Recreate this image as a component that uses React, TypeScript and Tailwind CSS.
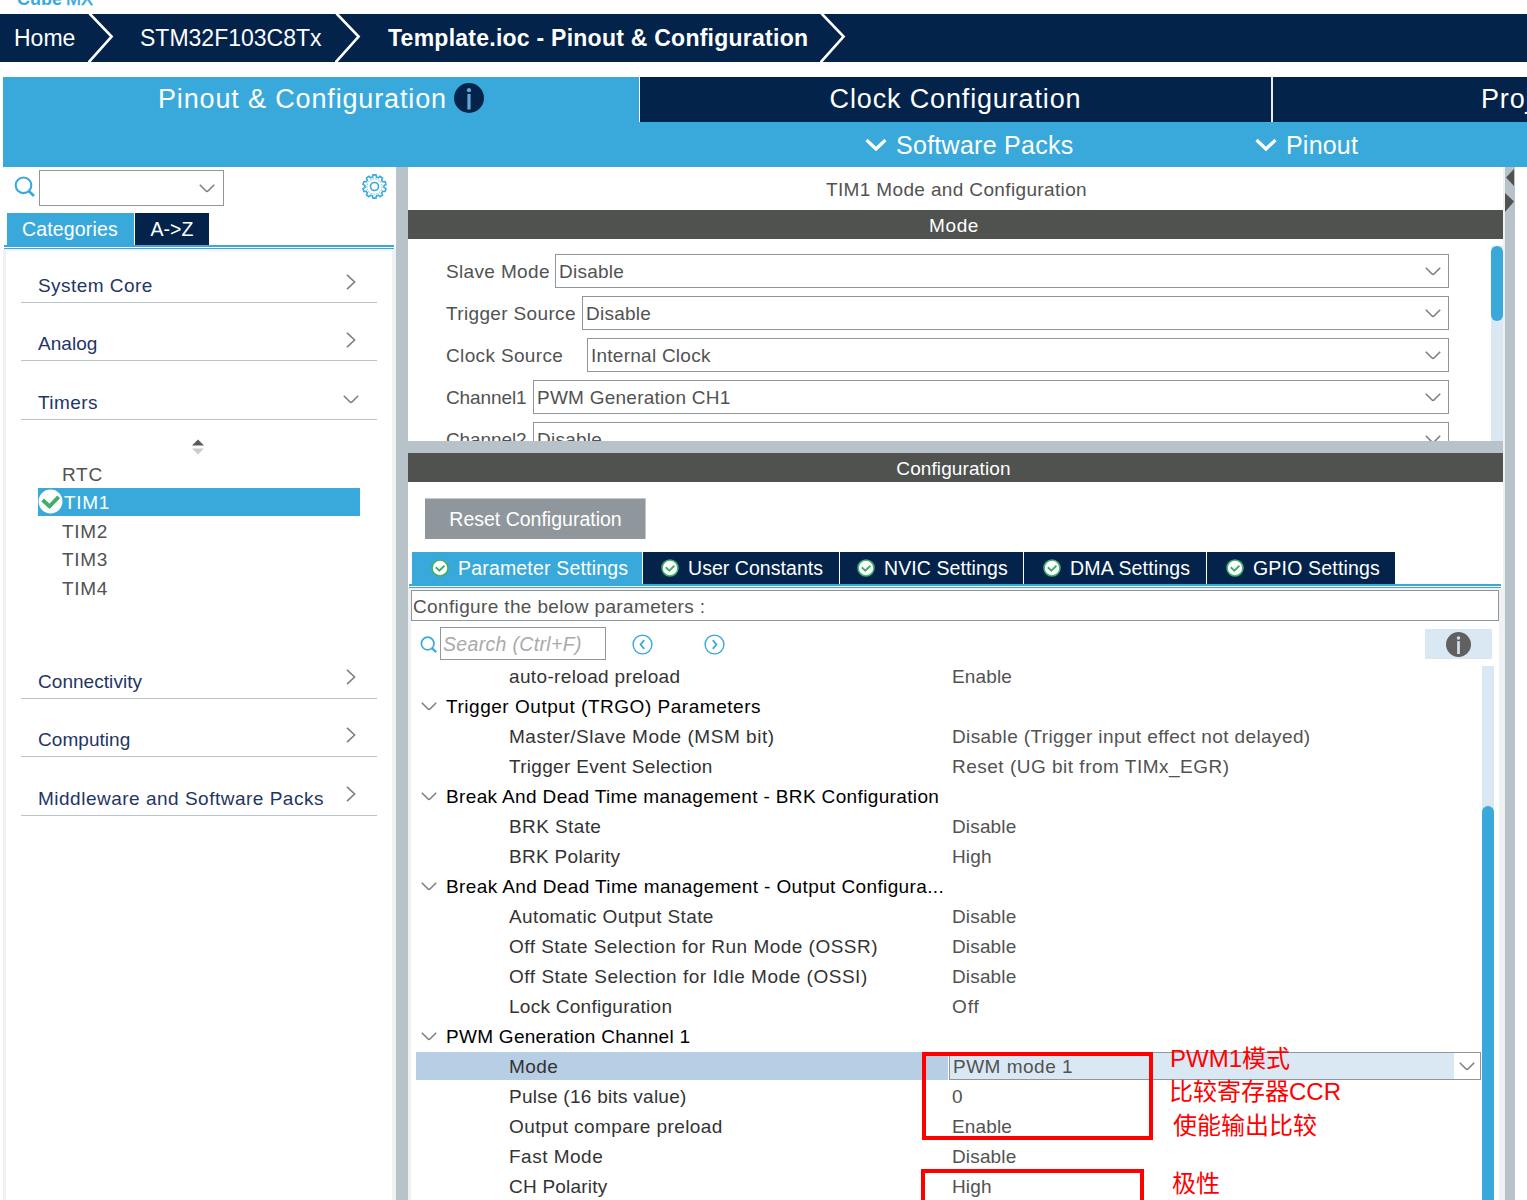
import { clsx } from 'clsx';

type IconProps = { className?: string };

function ChevronDown({ className }: IconProps) {
  return (
    <svg viewBox="0 0 16 9" className={clsx('h-[9px] w-4 shrink-0', className)} fill="none" stroke="currentColor" strokeWidth="1.6">
      <path d="M0.8 0.8 L6.8 6.8 Q8 8 9.2 6.8 L15.2 0.8" />
    </svg>
  );
}

function ChevronRight({ className }: IconProps) {
  return (
    <svg viewBox="0 0 10 16" className={clsx('h-4 w-[10px] shrink-0', className)} fill="none" stroke="currentColor" strokeWidth="1.6">
      <path d="M1 0.8 L8.6 8 L1 15.2" />
    </svg>
  );
}

function MenuChevron() {
  return (
    <svg viewBox="0 0 22 14" className="mt-px h-[14px] w-[22px]" fill="none" stroke="white" strokeWidth="3.2">
      <path d="M1.5 2 L11 11 L20.5 2" />
    </svg>
  );
}

function CrumbArrow() {
  return (
    <svg viewBox="0 0 26 48" className="h-12 w-[26px] shrink-0" fill="none" stroke="white" strokeWidth="2.6">
      <path d="M1.5 -0.5 L23.6 22.5 L0.5 48.5" />
    </svg>
  );
}

function SearchIcon({ className }: IconProps) {
  return (
    <svg viewBox="0 0 21 21" className={clsx('shrink-0 text-[#39a9dc]', className)} fill="none" stroke="currentColor" strokeWidth="2.1">
      <circle cx="9.5" cy="9.3" r="7.8" />
      <path d="M14.5 14.8 L20 20" strokeWidth="2.8" />
    </svg>
  );
}

function GearIcon() {
  const teeth = [0, 36, 72, 108, 144, 180, 216, 252, 288, 324];
  return (
    <svg viewBox="-12.5 -12.5 25 25" className="size-[25px]" fill="none" stroke="#39a9dc">
      {teeth.map((a) => (
        <path key={a} transform={`rotate(${a})`} strokeWidth="1.6" d="M-3.1 -9.2 L-2 -9.3 L-1.5 -11.6 L1.5 -11.6 L2 -9.3 L3.1 -9.2" />
      ))}
      <circle r="7.6" strokeWidth="0.8" strokeDasharray="1.6 1.2" />
      <circle r="4" strokeWidth="1.6" />
    </svg>
  );
}

function CheckBadge() {
  return (
    <svg viewBox="0 0 18 18" className="size-[18px] shrink-0" fill="none">
      <circle cx="9" cy="9" r="8" fill="white" stroke="#3fae6a" strokeWidth="1.6" />
      <path d="M4.8 8.2 L8.3 11.6 L13.4 6.8" stroke="#3fae6a" strokeWidth="1.9" />
    </svg>
  );
}

function InfoIcon({ className, glyph }: { className: string; glyph: string }) {
  return (
    <svg viewBox="0 0 30 30" className={clsx('shrink-0', className)}>
      <circle cx="15" cy="15" r="15" fill="currentColor" />
      <circle cx="15" cy="7.2" r="2.1" fill={glyph} />
      <path d="M13.4 11 H16.6 V26.5 H13.4 Z" fill={glyph} />
    </svg>
  );
}

function StepIcon({ flip }: { flip?: boolean }) {
  return (
    <svg viewBox="0 0 21 21" className={clsx('size-[21px]', flip && 'rotate-180')} fill="none" stroke="#39a9dc">
      <circle cx="10.5" cy="10.5" r="9.4" strokeWidth="1.4" />
      <path d="M12.2 6.2 L8.6 10.5 L12.2 14.8" strokeWidth="1.8" />
    </svg>
  );
}

function Category({ label, open, tracking, line = 'mt-[-1px]' }: { label: string; open?: boolean; tracking: string; line?: string }) {
  return (
    <div className={clsx('ml-[15px] flex h-[59px] w-[356px] items-end border-b border-[#b7c3c9]', line)}>
      <div className="flex h-[34px] w-full items-center pl-[17px]">
        <span className={clsx('flex-1 whitespace-nowrap text-[#1f3566]', tracking)}>{label}</span>
        {open ? <ChevronDown className="mr-[18px] mb-[6px] text-[#808080]" /> : <ChevronRight className="mr-[21px] mb-[7px] text-[#808080]" />}
      </div>
    </div>
  );
}

const timers = ['RTC', 'TIM1', 'TIM2', 'TIM3', 'TIM4'];

function Sidebar() {
  return (
    <aside className="flex w-[396px] flex-col">
      <div className="flex h-[46px] items-start pt-[3px] pl-[14px]">
        <SearchIcon className="mt-[6px] size-[21px]" />
        <div className="ml-1 flex h-9 w-[185px] items-center justify-end border border-[#8f979d] pr-2">
          <ChevronDown className="text-[#808080]" />
        </div>
        <div className="mt-1 ml-[138px]">
          <GearIcon />
        </div>
      </div>
      <div className="flex h-8 gap-px pl-[7px] text-[19.5px] text-white">
        <div className="flex w-[127px] items-center bg-[#39a9dc] pt-[2px] pl-[15px] tracking-[0.15px]">Categories</div>
        <div className="flex w-[74px] items-center justify-center bg-[#03234b] pt-[2px]">A-&gt;Z</div>
      </div>
      <div className="ml-1 h-[4px] w-[390px] border-t-2 border-b border-[#39a9dc]" />
      <div className="ml-[3px] flex-1 border-t-2 border-r-4 border-l-[3px] border-[#f0f1f2]">
        <Category label="System Core" tracking="tracking-[0.45px]" line="mt-[-7px]" />
        <Category label="Analog" tracking="tracking-[0.05px]" />
        <Category label="Timers" open tracking="tracking-[0.45px]" line="" />
        <div className="flex h-10 items-center pt-[14px] pl-[185px]">
          <svg viewBox="0 0 14 16" className="h-4 w-[14px]">
            <path d="M1 6.5 L7 0.5 L13 6.5 Z" fill="#5b5b5b" />
            <path d="M1 9.5 L7 15.5 L13 9.5 Z" fill="#cccccc" />
          </svg>
        </div>
        <ul className="-mt-px ml-8 w-[322px] text-[#525252]">
          {timers.map((name) => (
            <li key={name} className={clsx('flex h-[28.5px] items-center tracking-[0.7px]', name === 'TIM1' ? 'bg-[#39a9dc] text-white' : 'pl-6')}>
              {name === 'TIM1' && (
                <svg viewBox="0 0 26 26" className="mr-px size-[25px]">
                  <circle cx="13" cy="13" r="12.4" fill="white" />
                  <path d="M4.8 11.4 L12 18 L21.5 8.2" fill="none" stroke="#3fae6a" strokeWidth="4" />
                </svg>
              )}
              <span className="pt-[2px]">{name}</span>
            </li>
          ))}
        </ul>
        <Category label="Connectivity" tracking="pt-[2px] tracking-[0.05px]" line="mt-[38px]" />
        <Category label="Computing" tracking="pt-[2px] tracking-[0.05px]" />
        <Category label="Middleware and Software Packs" tracking="pt-[2px] tracking-[0.5px]" line="" />
      </div>
    </aside>
  );
}

const modes = [
  { label: 'Slave Mode', value: 'Disable', width: 'w-[109px]' },
  { label: 'Trigger Source', value: 'Disable', width: 'w-[136px]' },
  { label: 'Clock Source', value: 'Internal Clock', width: 'w-[141px]' },
  { label: 'Channel1', value: 'PWM Generation CH1', width: 'w-[87px]' },
  { label: 'Channel2', value: 'Disable', width: 'w-[87px]' },
];

function ModePanel() {
  return (
    <section className="flex h-[202px] shrink-0 overflow-hidden">
      <div className="flex w-[1041px] flex-col gap-2 pt-[15px] pl-[38px]">
        {modes.map((m) => (
          <div key={m.label} className="flex h-[34px] shrink-0 items-center">
            <span className={clsx('shrink-0 whitespace-nowrap', m.width, m.label.startsWith('Channel') ? 'tracking-[-0.1px]' : 'tracking-[0.35px]')}>{m.label}</span>
            <div className="flex h-full flex-1 items-center justify-between border border-[#8f979d] pr-[7px] pl-[3px]">
              <span className="tracking-[0.25px]">{m.value}</span>
              <ChevronDown className="text-[#808080]" />
            </div>
          </div>
        ))}
      </div>
      <div className="mt-[7px] ml-[42px] w-3 bg-[#dae8f4]">
        <div className="h-[75px] rounded-full bg-[#39a9dc]" />
      </div>
    </section>
  );
}

const settingTabs = [
  { label: 'Parameter Settings', style: 'w-[230px] pl-[19px] tracking-[0.18px]' },
  { label: 'User Constants', style: 'w-[196px] pl-[18px] tracking-[0.05px]' },
  { label: 'NVIC Settings', style: 'w-[183px] pl-[17px] tracking-[0.1px]' },
  { label: 'DMA Settings', style: 'w-[182px] pl-[19px] tracking-[0.18px]' },
  { label: 'GPIO Settings', style: 'w-[188px] pl-[19px] tracking-[0.18px]' },
];

type Row = { label: string; value?: string; group?: boolean; selected?: boolean; spacing?: string; valueSpacing?: string };

const rows: Row[] = [
  { label: 'auto-reload preload', value: 'Enable', spacing: 'tracking-[0.35px]' },
  { label: 'Trigger Output (TRGO) Parameters', group: true, spacing: 'tracking-[0.53px]' },
  { label: 'Master/Slave Mode (MSM bit)', value: 'Disable (Trigger input effect not delayed)', spacing: 'tracking-[0.53px]', valueSpacing: 'tracking-[0.39px]' },
  { label: 'Trigger Event Selection', value: 'Reset (UG bit from TIMx_EGR)', spacing: 'tracking-[0.3px]', valueSpacing: 'tracking-[0.5px]' },
  { label: 'Break And Dead Time management - BRK Configuration', group: true, spacing: 'tracking-[0.36px]' },
  { label: 'BRK State', value: 'Disable' },
  { label: 'BRK Polarity', value: 'High', spacing: 'tracking-[0.3px]' },
  { label: 'Break And Dead Time management - Output Configura...', group: true, spacing: 'tracking-[0.38px]' },
  { label: 'Automatic Output State', value: 'Disable', spacing: 'tracking-[0.38px]' },
  { label: 'Off State Selection for Run Mode (OSSR)', value: 'Disable', spacing: 'tracking-[0.48px]' },
  { label: 'Off State Selection for Idle Mode (OSSI)', value: 'Disable', spacing: 'tracking-[0.53px]' },
  { label: 'Lock Configuration', value: 'Off', spacing: 'tracking-[0.27px]', valueSpacing: 'tracking-[0.9px]' },
  { label: 'PWM Generation Channel 1', group: true, spacing: 'tracking-[0.28px]' },
  { label: 'Mode', value: 'PWM mode 1', selected: true, valueSpacing: 'tracking-[0.5px]' },
  { label: 'Pulse (16 bits value)', value: '0', spacing: 'tracking-[0.26px]' },
  { label: 'Output compare preload', value: 'Enable' },
  { label: 'Fast Mode', value: 'Disable', spacing: 'tracking-[0.5px]' },
  { label: 'CH Polarity', value: 'High', spacing: 'tracking-[0.22px]' },
];

function ParameterRow({ label, value, group, selected, spacing = 'tracking-[0.4px]', valueSpacing = 'tracking-[0.15px]' }: Row) {
  if (group) {
    return (
      <div className="flex h-[30px] items-center pl-[10px] whitespace-nowrap text-black">
        <ChevronDown className="mr-[9px] text-[#808080]" />
        <span className={spacing}>{label}</span>
      </div>
    );
  }
  return (
    <div className="flex h-[30px] items-center whitespace-nowrap">
      <div className={clsx('ml-[5px] flex h-7 w-[532px] items-center pl-[93px] text-[#333]', spacing, selected && 'bg-[#b8cee5]')}>{label}</div>
      {selected ? (
        <div className="ml-px flex h-7 w-[532px] items-center border border-[#8f979d] bg-[#dae8f4] pl-[3px]">
          <span className={clsx('flex-1', valueSpacing)}>{value}</span>
          <div className="flex h-full w-[26px] items-center justify-center bg-white">
            <ChevronDown className="text-[#808080]" />
          </div>
        </div>
      ) : (
        <span className={clsx('pl-1', valueSpacing)}>{value}</span>
      )}
    </div>
  );
}

function ConfigurationPanel() {
  return (
    <section className="flex flex-1 flex-col">
      <button className="mt-4 ml-[17px] h-[41px] w-[221px] shrink-0 border-t border-r border-[#c3c9cd] bg-[#8f979d] pt-px pl-px text-[19.5px] text-white">Reset Configuration</button>
      <div className="mt-[13px] flex h-8 shrink-0 gap-px pl-1 text-[19.5px] text-white">
        {settingTabs.map((tab, i) => (
          <div key={tab.label} className={clsx('flex items-center gap-[9px] whitespace-nowrap', tab.style, i === 0 ? 'bg-[#39a9dc]' : 'bg-[#03234b]')}>
            <CheckBadge />
            <span className="pt-[2px]">{tab.label}</span>
          </div>
        ))}
      </div>
      <div className="ml-px h-[4px] w-[1092px] shrink-0 border-t-2 border-b border-[#39a9dc]" />
      <div className="flex h-[612px] flex-col border-t-2 border-r-4 border-l-[3px] border-[#f0f1f2]">
        <div className="flex h-[31px] shrink-0 items-center border border-[#8f979d] pt-[2px] pl-px tracking-[0.36px]">Configure the below parameters :</div>
        <div className="flex h-10 shrink-0 items-start pt-[6px] pl-[9px]">
          <SearchIcon className="mt-[9px] size-[17px]" />
          <div className="ml-[3px] flex h-[33px] w-[166px] shrink-0 items-center border border-[#8f979d] pt-[3px] pl-[2px] text-[19.5px] tracking-[0.33px] text-[#aaaaaa] italic">Search (Ctrl+F)</div>
          <div className="mt-[7px] ml-[26px]">
            <StepIcon />
          </div>
          <div className="mt-[7px] ml-[51px]">
            <StepIcon flip />
          </div>
          <div className="mt-[2px] mr-[7px] ml-auto flex h-[30px] w-[67px] items-center justify-center bg-[#dae8f4] text-[#606060]">
            <InfoIcon className="size-[25px]" glyph="#d5e2ec" />
          </div>
        </div>
        <div className="flex min-h-0 flex-1">
          <div className="w-[1071px] overflow-hidden">
            {rows.map((row, i) => (
              <ParameterRow key={i} {...row} />
            ))}
          </div>
          <div className="mt-[5px] w-3 bg-[#dae8f4]">
            <div className="mt-[140px] h-full rounded-t-full bg-[#39a9dc]" />
          </div>
        </div>
      </div>
    </section>
  );
}

function SectionTitle({ children, spacing }: { children: string; spacing: string }) {
  return <div className={clsx('flex h-[29px] shrink-0 items-center justify-center bg-[#505250] pt-[2px] text-white', spacing)}>{children}</div>;
}

// Red notes drawn over the parameter table
function Annotations() {
  return (
    <div className="text-[24px] leading-[34px] whitespace-nowrap text-[#ff0000]">
      <div className="absolute top-[1052px] left-[922px] h-[88px] w-[231px] border-4 border-[#ff0000]" />
      <div className="absolute top-[1169px] left-[921px] h-[60px] w-[223px] border-4 border-[#ff0000]" />
      <span className="absolute top-[1042px] left-[1170px]">PWM1模式</span>
      <span className="absolute top-[1075px] left-[1169px]">比较寄存器CCR</span>
      <span className="absolute top-[1109px] left-[1173px]">使能输出比较</span>
      <span className="absolute top-[1167px] left-[1172px]">极性</span>
    </div>
  );
}

export default function App() {
  return (
    <div className="relative flex h-[1200px] w-[1527px] flex-col overflow-hidden bg-white font-['Liberation_Sans','Noto_Sans_CJK_SC',sans-serif] text-[19px] leading-none text-[#525252]">
      <div className="flex h-[14px] items-end overflow-hidden pb-[6px] pl-[17px] text-[18px] leading-[18px] text-[#39a9dc]">
        <b className="font-black">Cube</b>
        <span className="ml-1 [-webkit-text-stroke:0.5px_#39a9dc]">MX</span>
      </div>

      <nav className="flex h-12 shrink-0 items-center bg-[#03234b] text-[23px] whitespace-nowrap text-white">
        <span className="w-[88px] pl-[14px]">Home</span>
        <CrumbArrow />
        <span className="w-[221px] pl-[26px]">STM32F103C8Tx</span>
        <CrumbArrow />
        <span className="w-[459px] pl-[27px] font-bold tracking-[0.25px]">Template.ioc - Pinout &amp; Configuration</span>
        <CrumbArrow />
      </nav>

      <header className="mt-[15px] ml-[3px] shrink-0 overflow-hidden bg-[#39a9dc] text-white">
        <div className="flex h-[45px] text-[27px] tracking-[0.85px] whitespace-nowrap">
          <div className="flex w-[636px] shrink-0 items-center gap-[7px] pl-[155px] text-[#03234b]">
            <span className="text-white">Pinout &amp; Configuration</span>
            <InfoIcon className="mb-[3px] size-[30px]" glyph="#5fa9d3" />
          </div>
          <div className="flex w-[632px] shrink-0 items-center justify-center border-l border-white bg-[#03234b]">Clock Configuration</div>
          <div className="flex flex-1 items-center border-l-2 border-[#e8ecf0] bg-[#03234b] pl-[208px]">Project Manager</div>
        </div>
        <div className="flex h-[45px] items-center text-[25px]">
          <div className="ml-[862px] flex w-[390px] items-center gap-[9px]">
            <MenuChevron />
            <span className="pt-[2px] tracking-[0.28px]">Software Packs</span>
          </div>
          <div className="flex items-center gap-[9px]">
            <MenuChevron />
            <span className="pt-[2px] tracking-[0.2px]">Pinout</span>
          </div>
        </div>
      </header>

      <div className="flex min-h-0 flex-1">
        <Sidebar />
        <div className="w-3 bg-[#b7c3c9]" />
        <main className="flex w-[1095px] flex-col">
          <div className="flex h-[43px] shrink-0 items-center justify-center pt-[2px] pl-[2px] tracking-[0.36px]">TIM1 Mode and Configuration</div>
          <SectionTitle spacing="tracking-[0.6px] pr-[3px]">Mode</SectionTitle>
          <ModePanel />
          <div className="h-3 shrink-0 bg-[#b7c3c9]" />
          <SectionTitle spacing="tracking-[0.1px] pr-[4px]">Configuration</SectionTitle>
          <ConfigurationPanel />
        </main>
        <div className="w-3 border-l-2 border-[#f0f1f2] bg-[#b7c3c9]">
          <svg viewBox="0 0 10 46" className="h-[46px] w-[10px]" fill="#505250">
            <path d="M9 2 L1 10.5 L9 19 Z" />
            <path d="M0 26 L9 34.5 L0 45 Z" />
          </svg>
        </div>
      </div>

      <Annotations />
    </div>
  );
}
